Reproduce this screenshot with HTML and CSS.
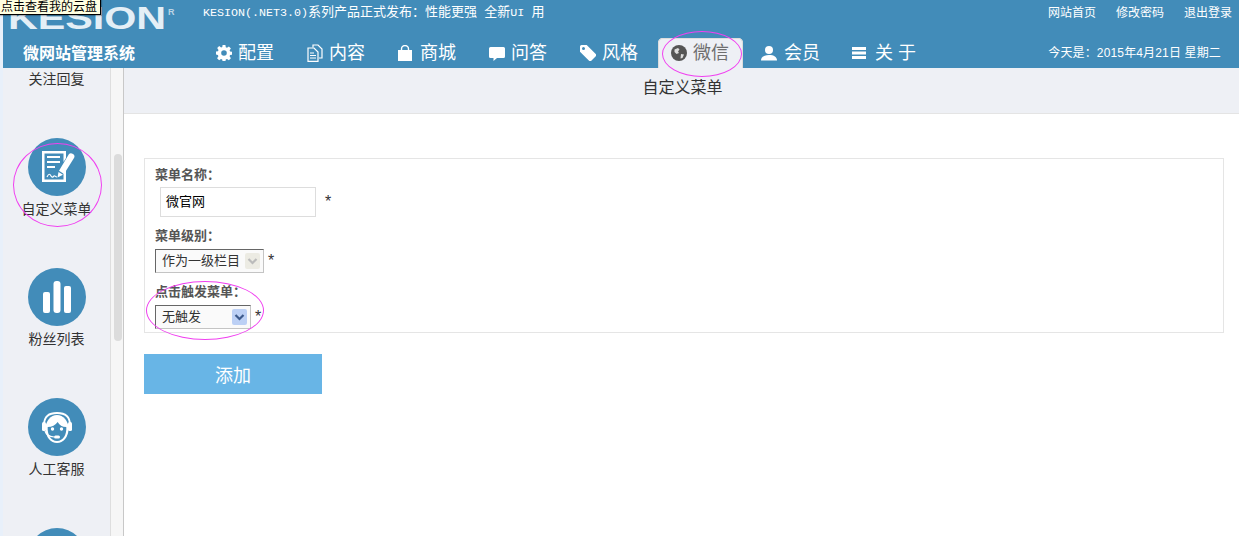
FILE: index.html
```html
<!DOCTYPE html>
<html lang="zh">
<head>
<meta charset="utf-8">
<title>微网站管理系统</title>
<link rel="stylesheet" href="styles.css">
</head>
<body>
<div class="app">
  <header class="header">
    <div class="top-row">
      <div class="logo"><span class="logo-text">KESION</span><span class="logo-r">R</span></div>
      <div class="notice"><span class="mono">KESION(.NET3.0)</span>系列产品正式发布<span class="colon">：</span>性能更强&nbsp;&nbsp;全新<span class="mono">UI</span>&nbsp;&nbsp;用</div>
      <nav class="links"><a>网站首页</a><a>修改密码</a><a>退出登录</a></nav>
    </div>
    <div class="nav-row">
      <div class="brand">微网站管理系统</div>
      <nav class="nav">
        <a class="nav-item">
          <svg class="nav-icon" viewBox="0 0 16 16"><path fill="#fff" fill-rule="evenodd" d="M6.600 0h2.800l.4 2.200 1.200.5 1.900-1.300 2 2-1.300 1.900.5 1.200 2.200.4v2.800l-2.200.4-.5 1.200 1.300 1.900-2 2-1.900-1.300-1.200.5-.4 2.200H6.600l-.4-2.200-1.200-.5-1.900 1.300-2-2 1.300-1.900-.5-1.200L-.2 9.400V6.600l2.200-.4.5-1.200L1.200 3.100l2-2 1.900 1.300 1.200-.5zM8 5.200a2.800 2.800 0 1 0 0 5.600 2.800 2.800 0 0 0 0-5.600z"/></svg>
          配置</a>
        <a class="nav-item">
          <svg class="nav-icon nav-icon-tall" viewBox="0 0 16 18"><g fill="none" stroke="#fff" stroke-width="1.200"><path d="M6 3.500V1h5l4 4v9h-3"/><path d="M1 4h6l4 4v9.400H1z"/></g><path stroke="#fff" stroke-width="1.200" d="M3 9h4M3 11.500h6M3 14h6"/></svg>
          内容</a>
        <a class="nav-item nav-shop">
          <svg class="nav-icon" viewBox="0 0 16 16"><path fill="#fff" d="M1 5h14v11H1z"/><path fill="none" stroke="#fff" stroke-width="1.400" d="M4.500 6V4a3.500 3.500 0 0 1 7 0v2"/></svg>
          商城</a>
        <a class="nav-item">
          <svg class="nav-icon" viewBox="0 0 16 16"><path fill="#fff" d="M1.500 2h13A1.500 1.500 0 0 1 16 3.500v8a1.500 1.500 0 0 1-1.500 1.500H8l-3.500 3V13h-3A1.500 1.500 0 0 1 0 11.500v-8A1.500 1.500 0 0 1 1.500 2z"/></svg>
          问答</a>
        <a class="nav-item">
          <svg class="nav-icon" viewBox="0 0 16 16"><path fill="#fff" fill-rule="evenodd" d="M0 1.500A1.500 1.500 0 0 1 1.500 0h5.200L16 9.300a1.200 1.200 0 0 1 0 1.700L11 16a1.200 1.200 0 0 1-1.700 0L0 6.700zM3.500 2a1.500 1.500 0 1 0 0 3 1.500 1.500 0 0 0 0-3z"/></svg>
          风格</a>
        <a class="nav-item nav-active">
          <svg class="nav-icon" viewBox="0 0 16 16"><circle cx="8" cy="8" r="8" fill="#555"/><path fill="#ddd" d="M3.500 4.500 7 3l1.500 1.500L7 6.500l1 1.500-2.500 1L3.500 7zM10 9l3 .5-1.500 3.500-2 .5z"/></svg>
          微信</a>
        <a class="nav-item nav-member">
          <svg class="nav-icon" viewBox="0 0 16 16"><circle cx="8" cy="5" r="4" fill="#fff"/><path fill="#fff" d="M0 15.500c0-3.500 3-5.500 8-5.500s8 2 8 5.500z"/></svg>
          会员</a>
        <a class="nav-item nav-about">
          <svg class="nav-icon" viewBox="0 0 16 16"><path fill="#fff" d="M1 2h14v3H1zM1 6.500h14v3H1zM1 11h14v3H1z"/></svg>
          关&nbsp;于</a>
      </nav>
      <div class="today">今天是<span class="colon">：</span>2015年4月21日 星期二</div>
    </div>
  </header>

  <div class="body-row">
    <aside class="side">
      <div class="side-list">
        <div class="side-item"><div class="circle"></div><div class="side-label">关注回复</div></div>
        <div class="side-item">
          <div class="circle">
            <svg class="circle-icon" viewBox="0 0 58 58">
              <path fill="#fff" d="M14 13h24v7l-2.500 4v-8.500h-19v26h19V33l2.500-4v15H14z"/>
              <path stroke="#fff" stroke-width="2.200" d="M19 19h13M19 24h13M19 29h8"/>
              <path fill="none" stroke="#fff" stroke-width="1.200" d="M19 39c2-4 3-3 4-1s2 1 3 0 1 1 3 1"/>
              <path fill="#fff" d="M41 16c1-1 2.500-1 4 0s2 2.500 1 4L36 36l-5-3.200zM30.500 34l4.500 2.800-5.500 2.700z"/>
            </svg>
          </div>
          <div class="side-label">自定义菜单</div>
        </div>
        <div class="side-item">
          <div class="circle">
            <svg class="circle-icon" viewBox="0 0 58 58"><g fill="#fff"><rect x="15" y="24" width="7" height="21" rx="2"/><rect x="25.500" y="13" width="7" height="32" rx="3"/><rect x="36" y="18" width="7" height="27" rx="2"/></g></svg>
          </div>
          <div class="side-label">粉丝列表</div>
        </div>
        <div class="side-item">
          <div class="circle">
            <svg class="circle-icon" viewBox="0 0 58 58">
              <path fill="none" stroke="#fff" stroke-width="1.800" d="M16 27C16 18 21 15 29 15S42 18 42 27"/>
              <rect x="14" y="24" width="4" height="9" rx="1.500" fill="#fff"/>
              <rect x="40" y="24" width="4" height="9" rx="1.500" fill="#fff"/>
              <ellipse cx="29" cy="31" rx="11.500" ry="14" fill="#fff"/>
              <path fill="#428cb9" d="M19.700 29c4 0 8-2 10-5 1.500 3 4.500 5 8.600 5 .5 7.500-3 14-9.300 14s-9.800-6.500-9.300-14z"/>
              <circle cx="24.500" cy="31" r="1.700" fill="#fff"/>
              <circle cx="33.500" cy="31" r="1.700" fill="#fff"/>
              <path fill="none" stroke="#fff" stroke-width="1.200" d="M17 33c1 3.500 4 5.500 9 6"/>
              <rect x="26" y="37.500" width="6" height="3" rx="1.500" fill="#fff"/>
            </svg>
          </div>
          <div class="side-label">人工客服</div>
        </div>
        <div class="side-item"><div class="circle"></div></div>
      </div>
      <div class="scroll-track"><div class="scroll-thumb"></div></div>
    </aside>

    <main class="main">
      <div class="page-title">自定义菜单</div>
      <form class="form-box">
        <div class="field-label">菜单名称<span class="colon">：</span></div>
        <div class="field-row field-row-text">
          <div class="text-input">微官网</div>
          <span class="star star-wide">*</span>
        </div>
        <div class="field-label field-next">菜单级别<span class="colon">：</span></div>
        <div class="field-row">
          <div class="select select-level">作为一级栏目
            <span class="select-btn select-btn-off"><svg viewBox="0 0 15 16"><path fill="none" stroke="#bbb" stroke-width="2.200" d="M3.500 6l4 4 4-4"/></svg></span>
          </div>
          <span class="star">*</span>
        </div>
        <div class="field-label field-next">点击触发菜单<span class="colon">：</span></div>
        <div class="field-row">
          <div class="select select-trigger">无触发
            <span class="select-btn"><svg viewBox="0 0 15 16"><path fill="none" stroke="#3d5a8c" stroke-width="2.200" d="M3.500 6l4 4 4-4"/></svg></span>
          </div>
          <span class="star">*</span>
        </div>
      </form>
      <button class="add-btn" type="button">添加</button>
    </main>
  </div>

  <div class="tooltip">点击查看我的云盘</div>
  <div class="mark mark-tab"></div>
  <div class="mark mark-side"></div>
  <div class="mark mark-select"></div>
</div>
</body>
</html>
```
FILE: styles.css
```css
* { box-sizing: border-box; }
html, body { margin: 0; height: 100%; overflow: hidden; background: #fff; }
body { font-family: "Liberation Sans", "Noto Sans CJK SC", sans-serif; color: #333; }
a { color: inherit; text-decoration: none; }
.colon { font-family: "Noto Sans CJK TC", sans-serif; line-height: 0; }

.app { position: relative; width: 1239px; height: 536px; overflow: hidden; padding-left: 3px; background: #e8f0fa; display: flex; flex-direction: column; }

/* header */
.header { height: 68px; flex: none; background: #428cb9; color: #fff; }
.top-row { height: 38px; display: flex; align-items: flex-start; }
.logo { position: relative; width: 200px; height: 31px; overflow: hidden; padding-left: 5px; }
.logo-text { display: block; margin-top: 2px; font-size: 31px; line-height: 34px; font-weight: bold; color: #e4eff6; transform: scaleX(1.33); transform-origin: left center; white-space: nowrap; }
.logo-r { position: absolute; left: 165px; top: 8px; font-size: 9px; line-height: 9px; font-weight: bold; color: #bcd5e5; }
.notice { font-size: 13px; line-height: 16px; padding-top: 4px; white-space: nowrap; }
.mono { font-family: "Liberation Mono", monospace; font-size: 11.67px; }
.links { margin-left: auto; display: flex; gap: 20px; padding: 5px 7px 0 0; font-size: 12px; line-height: 16px; }

.nav-row { height: 30px; display: flex; align-items: stretch; }
.brand { width: 200px; padding-left: 20px; font-size: 16px; font-weight: bold; line-height: 32px; }
.nav { display: flex; gap: 6px; }
.nav-item { width: 85px; padding-left: 13px; display: flex; align-items: center; gap: 6px; font-size: 18px; line-height: 30px; white-space: nowrap; }
.nav-icon { width: 16px; height: 16px; flex: none; }
.nav-icon-tall { height: 18px; }
.nav-shop { margin-left: -1px; margin-right: 1px; gap: 7px; }
.nav-active { background: #eef0f5; color: #6e6e6e; border-radius: 5px 5px 0 0; box-shadow: inset 0 1px 0 #ddd, inset 1px 0 0 #ddd, inset -1px 0 0 #ddd; }
.nav-member { margin-left: -1px; margin-right: 1px; gap: 7px; }
.nav-about { margin-left: -2px; gap: 8px; }
.today { margin-left: auto; padding-right: 18px; font-size: 12px; line-height: 30px; letter-spacing: .15px; }

/* body */
.body-row { flex: 1; min-height: 0; display: flex; }
.side { width: 121px; flex: none; display: flex; overflow: hidden; background: #eef0f5; }
.side-list { width: 107px; flex: none; margin-top: -60px; }
.side-item { height: 130px; display: flex; flex-direction: column; align-items: center; }
.circle { width: 58px; height: 58px; flex: none; border-radius: 50%; background: #428cb9; }
.circle-icon { display: block; width: 58px; height: 58px; }
.side-label { margin-top: 4px; font-size: 14px; line-height: 18px; color: #333; white-space: nowrap; }
.scroll-track { width: 14px; flex: none; padding: 86px 2px 0 3px; background: #f6f6f6; border-left: 1px solid #dedede; border-right: 1px solid #c8c8c8; }
.scroll-thumb { width: 8px; height: 187px; border-radius: 4px; background: #dcdcdc; }

.main { flex: 1; min-width: 0; background: #fff; }
.page-title { height: 46px; padding: 10px 0 0 2px; background: #eef0f5; border-bottom: 1px solid #e4e4e4; text-align: center; font-size: 16px; line-height: 20px; color: #333; }
.form-box { margin: 44px 15px 0 20px; height: 175px; padding: 8px 10px 0; border: 1px solid #e5e5e5; }
.field-label { height: 16px; font-size: 13px; font-weight: bold; line-height: 16px; color: #555; }
.field-next { margin-top: 11px; }
.field-row { margin-top: 5px; display: flex; align-items: center; gap: 4px; }
.field-row-text { margin-top: 4px; padding-left: 5px; }
.text-input { width: 156px; height: 30px; padding-left: 5px; border: 1px solid #ddd; font-size: 13px; line-height: 28px; color: #000; }
.star { font-size: 16px; line-height: 14px; color: #333; }
.star-wide { margin-left: 5px; }
.select { position: relative; height: 24px; padding-left: 6px; background: #fafafa; border: 1px solid #c4c4c4; border-top-color: #666; border-left-color: #666; font-size: 13px; line-height: 22px; color: #333; white-space: nowrap; }
.select-level { width: 109px; }
.select-trigger { width: 96px; }
.select-btn { position: absolute; right: 3px; top: 3px; width: 15px; height: 16px; background: #bcd0f5; border-radius: 2px; }
.select-btn-off { background: #ecebe3; }
.select-btn svg { display: block; width: 15px; height: 16px; }
.add-btn { display: block; width: 178px; height: 40px; margin: 21px 0 0 20px; padding: 0; border: 0; background: #68b5e6; color: #fff; font: 18px "Liberation Sans", "Noto Sans CJK SC", sans-serif; }

/* overlays */
.tooltip { position: absolute; left: -1px; top: -1px; width: 102px; height: 16px; background: #ffffe1; border: 1px solid #000; box-shadow: 1px 1px 1px rgba(0,0,0,.25); font-size: 12px; line-height: 14px; padding-left: 1px; color: #000; white-space: nowrap; }
.mark { position: absolute; border: 1px solid #f040f0; border-radius: 50%; pointer-events: none; }
.mark-tab { left: 662px; top: 31px; width: 80px; height: 46px; }
.mark-side { left: 13px; top: 143px; width: 89px; height: 84px; }
.mark-select { left: 146px; top: 281px; width: 118px; height: 59px; }
```
